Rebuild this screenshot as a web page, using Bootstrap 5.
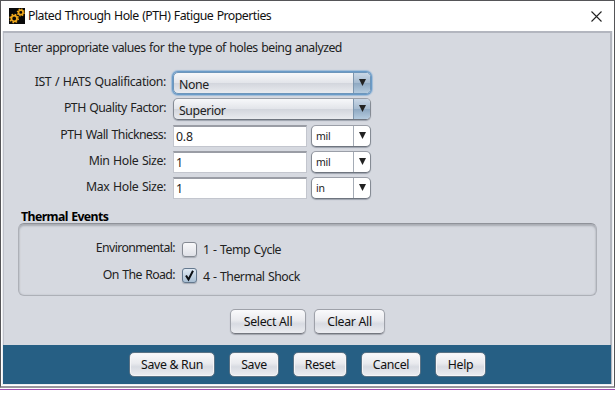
<!DOCTYPE html>
<html lang="en">
<head>
<meta charset="utf-8">
<meta name="viewport" content="width=device-width, initial-scale=1">
<title>Plated Through Hole (PTH) Fatigue Properties</title>
<link href="https://cdn.jsdelivr.net/npm/bootstrap@5.3.0/dist/css/bootstrap.min.css" rel="stylesheet">
<style>
  body { font: 12.3px/16px "Noto Sans", "Open Sans", sans-serif; letter-spacing: -.52px; word-spacing: .8px; color: #222; background: #fff; height: 401px; overflow: hidden; }
  .dialog { height: 388px; border: 1px solid #555558; border-bottom: 2px solid #98989e; }
  .titlebar { height: 30px; padding: 0 12px 0 8px; color: #111; }
  .title-text { margin-left: -1px; }
  .pane { margin: 0 1px; height: 354px; background: #d6d9e0; border: 1px solid #eceef2; border-top: 0; box-shadow: inset 0 2px #b3b6bf, inset 1px 0 #bfc2cb, inset -2px 0 #b3b6bf; }
  .rule-line { height: 1px; margin-top: 1px; background: #a04db0; }
  .intro { padding: 9px 0 0 11px; height: 41px; flex: none; }
  .form-line { height: 26.3px; flex: none; }
  .cap { width: 163px; text-align: right; height: 20px; margin: 2px 7px 0 0; flex: none; }
  .cap.roomy { letter-spacing: -.37px; }
  .picker { height: 22px; border: 1px solid #8b9099; border-color: #9b9fa8 #858b94 #6f757f; border-radius: 5px; overflow: hidden; box-shadow: 0 1px 1px #9da2ad; }
  .picker.wide { width: 198px; background: linear-gradient(#f7f8fa, #e3e5ea 48%, #d3d6dd 52%, #e9ebef); letter-spacing: -.4px; }
  .picker.unit { width: 60px; background: #fff; font-size: 10.5px; letter-spacing: -.3px; }
  .picker.focused { border-color: #6d96bb; box-shadow: 0 0 0 1px #6b9bc8, 0 0 1px 2px #9fbcd8; }
  .wide .choice { padding: 4px 0 0 5px; }
  .unit .choice { padding: 2px 0 0 4px; }
  .picker .drop { width: 17px; border-left: 1px solid #a5acb6; }
  .picker.wide .drop { background: linear-gradient(#c9d7e6, #a6bbd0 48%, #8fa9c2 52%, #b5cbdf); border-color: #7e96ae; }
  .arrow { width: 7px; height: 7px; margin-bottom: 1px; }
  .entry { width: 134px; height: 22px; margin-right: 4px; padding: 0 2px; border: 1px solid #c3c6ce; border-top: 2px solid #9a9da5; background: #fff; line-height: 20px; letter-spacing: -.2px; }
  .heading { margin: 6px 0 0 18px; height: 14px; font-weight: 700; color: #000; letter-spacing: -.6px; }
  .group { margin: 0 15px; height: 73px; padding-top: 16px; border: 1px solid #adb0b7; border-top-color: #8f9299; border-radius: 6px; box-shadow: inset 0 2px 2px #a9acb4, inset 0 0 2px #b8bbc3; }
  .group .cap { width: 156px; margin: 0 7px 0 0; letter-spacing: -.6px; }
  .event { padding-top: 2px; letter-spacing: -.5px; }
  .tick { width: 15px; height: 15px; margin: 2px 6px 0 0; border: 1px solid #858a93; border-radius: 3px; background: linear-gradient(#f8f8fa, #dfe1e7); box-shadow: 0 1px 1px #a8acb5; }
  .tick.on { border-color: #64788e; margin-top: 1px; background: linear-gradient(#e0eaf4, #a9bfd4); }
  .bulk { margin-top: 13px; }
  .push { height: 25px; padding: 0; border: 1px solid #9ea1a9; border-bottom-color: #74777f; border-radius: 5px; background: linear-gradient(#fafafc, #e9eaee 45%, #d8dbe2 60%, #ecedf1); box-shadow: 0 1px 1px #a0a3ab; font-size: inherit; line-height: 24px; letter-spacing: -.3px; color: #111; }
  .foot { height: 39px; margin: auto 1px 0 0; padding: 7px 0 0 126px; gap: 14px; background: #265f84; }
  .foot .push { border-color: #5a7285; box-shadow: inset 0 0 0 1px #f5f5f7; }
  .w-select { width: 76px; } .w-clear { width: 71px; } .w-run { width: 86px; }
  .w-save { width: 50px; } .w-reset { width: 54px; } .w-cancel { width: 60px; } .w-help { width: 51px; }
</style>
<script src="https://cdn.jsdelivr.net/npm/bootstrap@5.3.0/dist/js/bootstrap.bundle.min.js"></script>
</head>
<body>
<main class="dialog">
  <header class="titlebar d-flex align-items-center">
    <svg width="16" height="16" viewBox="0 0 16 16" class="me-1">
      <path fill="#090909" d="M0 0h16v16H0z"/>
      <g fill="none" stroke="#f0a81b">
        <circle cx="5.2" cy="10.5" r="2.8" stroke-width="1.8"/>
        <circle cx="5.2" cy="10.5" r="4.1" stroke-width="1.5" stroke-dasharray="1.6 1.62"/>
        <circle cx="11.8" cy="4.4" r="2.3" stroke-width="1.7"/>
        <circle cx="11.8" cy="4.4" r="3.4" stroke-width="1.3" stroke-dasharray="1.3 1.37"/>
      </g>
    </svg>
    <span class="title-text">Plated Through Hole (PTH) Fatigue Properties</span>
    <svg width="11" height="11" viewBox="0 0 11 11" class="ms-auto"><path d="M.5 .5l10 10M10.500 .5L.5 10.500" stroke="#222" stroke-width="1.1"/></svg>
  </header>
  <section class="pane d-flex flex-column">
    <div class="intro">Enter appropriate values for the type of holes being analyzed</div>
    <div class="form-line d-flex"><div class="cap roomy">IST / HATS Qualification:</div>
      <div class="picker wide focused d-flex"><span class="choice flex-grow-1">None</span><span class="drop d-flex align-items-center justify-content-center"><svg class="arrow" viewBox="0 0 8 8"><path d="M0 0h8L4 8z" fill="#222"/></svg></span></div></div>
    <div class="form-line d-flex"><div class="cap">PTH Quality Factor:</div>
      <div class="picker wide d-flex"><span class="choice flex-grow-1">Superior</span><span class="drop d-flex align-items-center justify-content-center"><svg class="arrow" viewBox="0 0 8 8"><path d="M0 0h8L4 8z" fill="#222"/></svg></span></div></div>
    <div class="form-line d-flex"><div class="cap">PTH Wall Thickness:</div><div class="entry">0.8</div>
      <div class="picker unit d-flex"><span class="choice flex-grow-1">mil</span><span class="drop d-flex align-items-center justify-content-center"><svg class="arrow" viewBox="0 0 8 8"><path d="M0 0h8L4 8z" fill="#222"/></svg></span></div></div>
    <div class="form-line d-flex"><div class="cap roomy">Min Hole Size:</div><div class="entry">1</div>
      <div class="picker unit d-flex"><span class="choice flex-grow-1">mil</span><span class="drop d-flex align-items-center justify-content-center"><svg class="arrow" viewBox="0 0 8 8"><path d="M0 0h8L4 8z" fill="#222"/></svg></span></div></div>
    <div class="form-line d-flex"><div class="cap roomy">Max Hole Size:</div><div class="entry">1</div>
      <div class="picker unit d-flex"><span class="choice flex-grow-1">in</span><span class="drop d-flex align-items-center justify-content-center"><svg class="arrow" viewBox="0 0 8 8"><path d="M0 0h8L4 8z" fill="#222"/></svg></span></div></div>
    <div class="heading flex-shrink-0">Thermal Events</div>
    <div class="group flex-shrink-0">
      <div class="form-line d-flex"><div class="cap">Environmental:</div><span class="tick"></span><span class="event">1 - Temp Cycle</span></div>
      <div class="form-line d-flex"><div class="cap">On The Road:</div><span class="tick on d-flex"><svg width="13" height="13" viewBox="0 0 13 13"><path d="M3 6.500l2.500 4L10 1.800" fill="none" stroke="#0b0f14" stroke-width="2"/></svg></span><span class="event">4 - Thermal Shock</span></div>
    </div>
    <div class="d-flex justify-content-center gap-2 bulk">
      <button class="btn push w-select">Select All</button>
      <button class="btn push w-clear">Clear All</button>
    </div>
    <footer class="foot d-flex">
      <button class="btn push w-run">Save &amp; Run</button>
      <button class="btn push w-save">Save</button>
      <button class="btn push w-reset">Reset</button>
      <button class="btn push w-cancel">Cancel</button>
      <button class="btn push w-help">Help</button>
    </footer>
  </section>
</main>
<div class="rule-line"></div>
</body>
</html>
